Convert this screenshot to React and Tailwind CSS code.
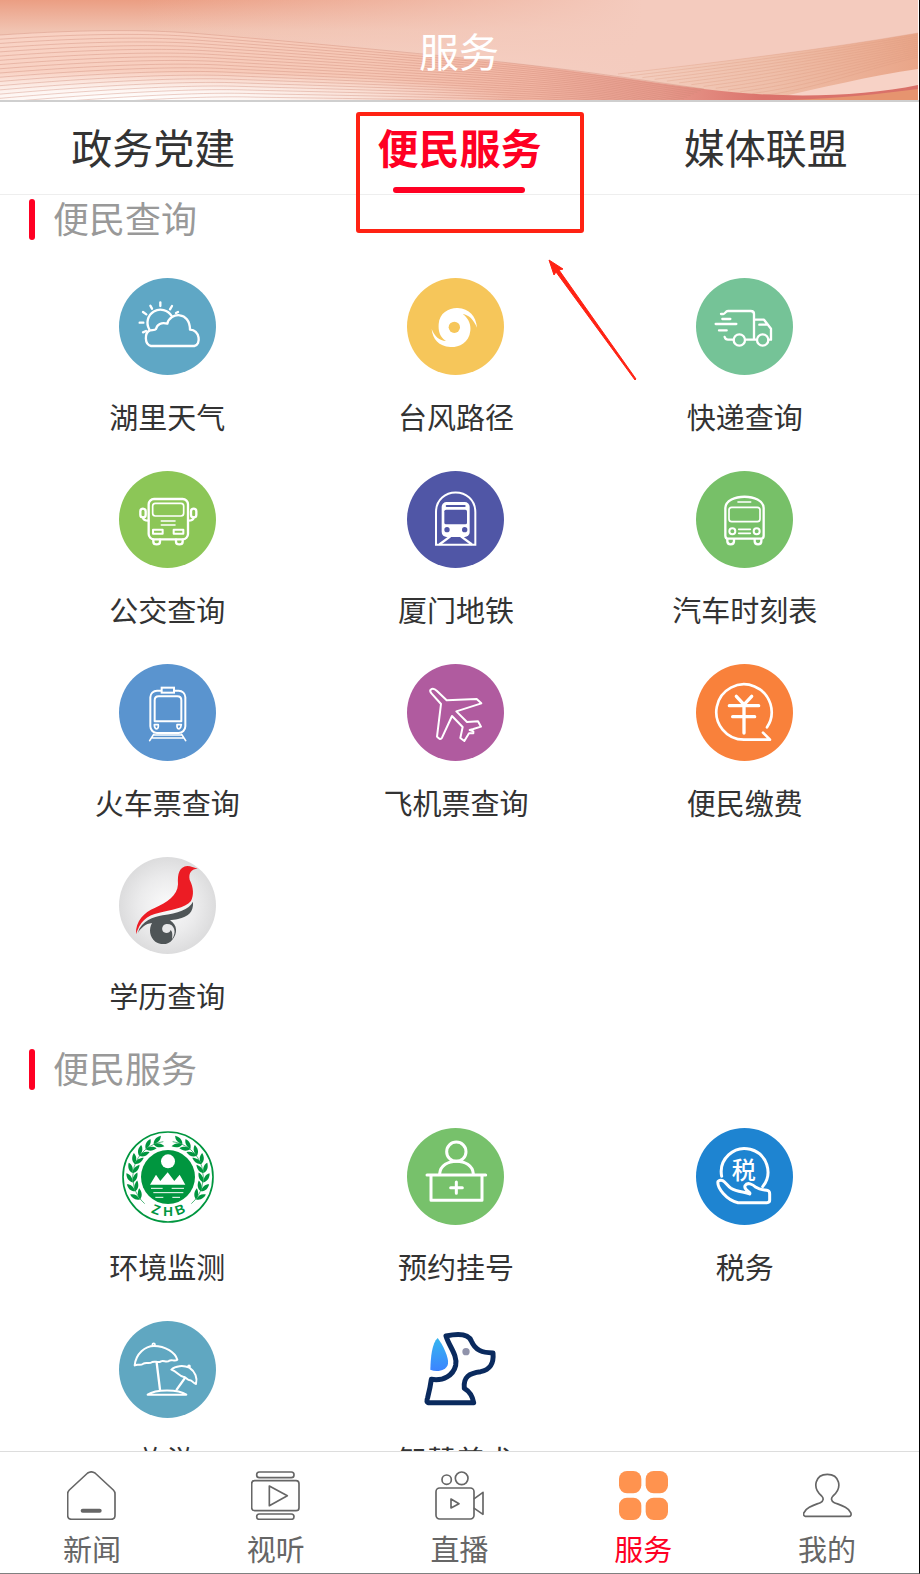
import React, { useState } from 'react';

const white = { fill: 'none', stroke: '#fff', strokeWidth: 7, strokeLinecap: 'round', strokeLinejoin: 'round' };
const outline = { fill: 'none', stroke: '#666', strokeWidth: 5, strokeLinecap: 'round', strokeLinejoin: 'round' };

// Round badge, every service icon is drawn on a 291 grid
function Badge({ color, x = 0, y = 0, children }) {
    return (
        <svg className="size-[97px]" viewBox="0 0 291 291" aria-hidden="true">
            {color && <circle cx="145.5" cy="145.5" r="145.5" fill={color} />}
            <g transform={`translate(${-x} ${-y})`}>{children}</g>
        </svg>
    );
}

function WeatherIcon() {
    return (
        <Badge color="#5fa7c5" x={87} y={54}>
            <g {...white}>
                <path d="M183 258C163 254 163 218 180 211C187 209 194 212 198 207C201 193 214 186 232 191C240 156 300 153 300 209C330 211 334 254 313 258Z" />
                <path d="M178 208A38 38 0 1 1 245 168" />
                <path d="M211 127V138M181 137L186 146M159 156L169 163M149 188H160M159 217L168 213M246 138L240 148M264 156L258 159" />
            </g>
        </Badge>
    );
}

function TyphoonIcon() {
    return (
        <Badge color="#f6c65a" x={951} y={54}>
            <path
                fill="#fff"
                d="M1046 192C1048 158 1078 143 1103 144C1138 146 1158 168 1161 203C1150 178 1137 165 1118 162C1138 176 1143 198 1141 212C1137 250 1105 262 1081 261C1046 259 1028 238 1025 207C1034 230 1048 242 1068 243C1047 230 1045 210 1046 192Z"
            />
            <circle cx="1093" cy="202" r="17" fill="#f6c65a" />
        </Badge>
    );
}

function TruckIcon() {
    return (
        <Badge color="#75c397" x={588} y={114}>
            <g {...white}>
                <path d="M663 222H670C676 222 676 213 684 213H752Q762 213 762 222V299M736 299H770" />
                <path d="M766 239H792L813 266V299H806M778 254H802M674 291Q676 299 684 299H700" />
                <path d="M667 237H691M647 252H709M657 271H680" />
                <circle cx="718" cy="300" r="17" />
                <circle cx="788" cy="300" r="17" />
            </g>
        </Badge>
    );
}

function BusIcon() {
    return (
        <Badge color="#8cc657" x={87} y={631}>
            <g {...white}>
                <rect x="176" y="715" width="118" height="121" rx="16" />
                <rect x="188" y="728" width="93" height="38" rx="8" strokeWidth="5" />
                <path d="M214 781H255M214 793H255" strokeWidth="5" />
                <rect x="189" y="807" width="29" height="12" strokeWidth="6" />
                <rect x="251" y="807" width="29" height="12" strokeWidth="6" />
                <rect x="151" y="744" width="16" height="26" rx="8" />
                <rect x="303" y="744" width="16" height="26" rx="8" />
                <path d="M159 770Q160 780 175 780M311 770Q310 780 295 780" />
                <path d="M190 837V843Q190 851 200 851Q210 851 210 843V837M258 837V843Q258 851 268 851Q278 851 278 843V837" />
            </g>
        </Badge>
    );
}

function MetroIcon() {
    return (
        <Badge color="#5056a6" x={951} y={631}>
            <path {...white} strokeWidth="6" strokeLinejoin="miter" d="M1038 852V755C1038 676 1156 676 1156 755V852Z" />
            <path {...white} d="M1080 828L1050 850M1114 828L1144 850" strokeWidth="7" />
            <rect x="1055" y="724" width="84" height="105" rx="15" fill="#fff" />
            <path d="M1070 736H1124" stroke="#5056a6" strokeWidth="6" strokeLinecap="round" />
            <rect x="1063" y="747" width="68" height="44" rx="5" fill="#5056a6" />
            <circle cx="1071" cy="807" r="8" fill="#5056a6" />
            <circle cx="1124" cy="807" r="8" fill="#5056a6" />
        </Badge>
    );
}

function CoachIcon() {
    return (
        <Badge color="#77c068" x={588} y={691}>
            <g {...white}>
                <path d="M676 885V802C678 757 789 757 791 802V885Q791 894 782 894H685Q676 894 676 885Z" />
                <rect x="687" y="800" width="93" height="43" rx="8" strokeWidth="5" />
                <path d="M714 784H752M716 866H751M716 878H751" strokeWidth="5" />
                <circle cx="697" cy="872" r="9" strokeWidth="6" />
                <circle cx="770" cy="872" r="9" strokeWidth="6" />
                <path d="M682 896V902Q682 911 692 911Q702 911 702 902V896M764 896V902Q764 911 774 911Q784 911 784 902V896" />
            </g>
        </Badge>
    );
}

function TrainIcon() {
    return (
        <Badge color="#5a94cf" x={87} y={69}>
            <g {...white} strokeWidth="6">
                <rect x="181" y="149" width="105" height="127" rx="20" />
                <rect x="215" y="140" width="37" height="15" fill="#5a94cf" strokeLinejoin="miter" />
                <path d="M194 241V178Q194 166 206 166H262Q274 166 274 178V241Z" />
                <path d="M193 251H205V257Q204 264 199 264Q193 261 193 251ZM274 251H261V257Q262 264 267 264Q273 261 274 251Z" strokeWidth="5" />
                <path d="M192 282H276M188 291H280M191 280L179 299M275 280L287 299" strokeWidth="5" />
            </g>
        </Badge>
    );
}

function PlaneIcon() {
    return (
        <Badge color="#b05b9f" x={951} y={69}>
            <path
                {...white}
                strokeWidth="6"
                d="M1022 146C1028 141 1036 145 1041 150L1070 178L1160 174L1174 187L1099 211L1131 243L1164 241L1173 257L1150 264L1139 267L1150 271V277L1137 277L1123 300L1111 291L1118 258L1086 225L1056 290Q1051 299 1041 287L1053 189L1025 158Q1018 150 1022 146Z"
            />
        </Badge>
    );
}

function PaymentIcon() {
    return (
        <Badge color="#f9813b" x={138} y={69}>
            <g {...white} strokeWidth="10">
                <path d="M351 259A83 83 0 1 0 282 296H360L339 275" strokeWidth="8" />
                <path d="M259 166L282 191L305 166M238 194H326M248 227H314M282 191V276" />
            </g>
        </Badge>
    );
}

function EducationIcon() {
    return (
        <Badge x={87} y={648}>
            <defs>
                <radialGradient id="silver">
                    <stop offset="0" stopColor="#fbfbfb" />
                    <stop offset="0.6" stopColor="#ebebec" />
                    <stop offset="1" stopColor="#dcdcdd" />
                </radialGradient>
            </defs>
            <circle cx="232.5" cy="793.5" r="145.5" fill="url(#silver)" />
            <path
                fill="#ec1c24"
                d="M138 880C136 840 163 814 194 801C232 784 262 765 264 730C262 698 268 677 292 675C303 675 310 680 323 683C305 684 295 694 299 716C311 740 312 762 303 780C285 802 240 807 208 815C168 824 150 842 138 880Z"
            />
            <path
                fill="#4f5557"
                d="M143 876C156 838 190 828 218 823C262 817 297 806 309 782C311 814 295 826 264 834C255 836 246 837 240 838C263 852 263 878 247 896C236 912 212 913 196 902C178 888 176 864 186 846C166 848 154 860 143 876Z"
            />
            <path fill="#e8e8e9" d="M222 874C213 868 215 851 229 849C252 847 262 872 246 895C248 880 247 872 242 867C240 875 230 879 222 874Z" />
        </Badge>
    );
}

function Laurel() {
    const steps = [2, 17, 32, 47, 62, 77, 92, 107];
    return (
        <g>
            <path d="M164 308A107 107 0 0 1 220 122" fill="none" stroke="#00963f" strokeWidth="2" />
            {steps.map((step) => (
                <g key={step} transform={`rotate(${-step - 12} 234 228)`}>
                    <path d="M216 122C220 107 232 103 243 103C240 115 230 122 216 122Z" />
                    <path d="M216 122C228 119 240 126 246 136C232 138 221 134 216 122Z" />
                </g>
            ))}
        </g>
    );
}

function EnvironmentIcon() {
    return (
        <Badge x={87} y={81}>
            <g fill="#00963f">
                <circle cx="234" cy="228" r="135" fill="#fff" stroke="#00963f" strokeWidth="5" />
                <circle cx="234" cy="228" r="81" />
                <Laurel />
                <g transform="translate(468 0) scale(-1 1)">
                    <Laurel />
                </g>
                <g fontFamily="Liberation Sans, Arial, sans-serif" fontWeight="700" fontSize="40" textAnchor="middle">
                    <text x="234" y="346" transform="rotate(20 234 228)">Z</text>
                    <text x="234" y="346">H</text>
                    <text x="234" y="346" transform="rotate(-20 234 228)">B</text>
                </g>
            </g>
            <circle cx="234" cy="181" r="21" fill="#fff" />
            <path fill="#fff" d="M180 251L198 221L211 240L233 214L253 240L269 221L286 251Z" />
            <path d="M183 262H218M245 262H282M190 275H280M196 289H220M247 289H270" stroke="#fff" strokeWidth="3" />
        </Badge>
    );
}

function RegisterIcon() {
    return (
        <Badge color="#77c16b" x={951} y={82}>
            <g {...white} strokeWidth="9">
                <circle cx="1099" cy="153" r="29" />
                <path d="M1049 219C1053 169 1146 169 1150 219M1011 223H1187M1023 226V299H1176V226" />
                <path d="M1082 261H1117M1099 244V278" />
            </g>
        </Badge>
    );
}

function TaxIcon() {
    return (
        <Badge color="#1e84d1" x={888} y={53}>
            <g {...white} strokeWidth="9">
                <path d="M965 198A70 70 0 1 1 1088 229" />
                <path d="M954 213C970 201 978 224 993 234C1012 246 1035 244 1049 251C1054 245 1030 239 1035 226C1042 214 1058 222 1068 231C1082 240 1096 238 1104 241Q1109 243 1109 251V270Q1109 277 1101 277H1014C980 270 950 232 954 213Z" />
            </g>
            <text x="1031" y="205" fill="#fff" fontSize="72" fontWeight="500" textAnchor="middle">税</text>
        </Badge>
    );
}

function TravelIcon() {
    return (
        <Badge color="#60a7c1" x={87} y={660}>
            <g {...white}>
                <path d="M134 793C138 758 165 735 192 735C226 735 256 755 262 776C254 783 246 774 238 779C230 786 221 777 213 781C204 787 195 779 187 783C178 790 168 783 160 788C151 795 142 788 134 793Z" strokeWidth="6" />
                <circle cx="191" cy="731" r="4" strokeWidth="5" />
                <path d="M200 785L210 866M284 832L260 866" />
                <path d="M244 806C256 794 280 792 298 800C316 812 323 832 318 849C309 847 307 838 300 838C292 838 288 828 280 827C267 825 262 812 244 806Z" strokeWidth="6" />
                <circle cx="297" cy="796" r="3" strokeWidth="5" />
                <path d="M173 881C197 864 265 864 289 881Z" strokeWidth="6" />
            </g>
        </Badge>
    );
}

function DogIcon() {
    return (
        <Badge x={951} y={660}>
            <defs>
                <linearGradient id="ear" x1="0" y1="0" x2="0" y2="1">
                    <stop offset="0" stopColor="#36b6ef" />
                    <stop offset="1" stopColor="#3b84ff" />
                </linearGradient>
            </defs>
            <path
                fill="none"
                stroke="#0a2a5e"
                strokeWidth="15"
                strokeLinejoin="round"
                d="M1068 705C1105 697 1136 700 1144 720C1156 748 1176 755 1209 756C1212 790 1199 806 1172 812C1138 816 1119 828 1123 862C1137 870 1148 888 1151 905H1014C1009 902 1011 895 1013 890C1018 870 1022 850 1024 835C1060 841 1090 823 1097 793C1103 762 1078 738 1068 705Z"
            />
            <path fill="url(#ear)" d="M1043 711C1058 730 1077 770 1074 788C1070 808 1042 815 1021 806C1022 770 1026 725 1043 711Z" />
            <circle cx="1128" cy="752" r="11" fill="#9093ab" />
        </Badge>
    );
}

function TabSvg({ x, y, children }) {
    return (
        <svg className="size-[49px]" viewBox="0 0 147 147" aria-hidden="true">
            <g transform={`translate(${-x} ${-y})`} {...outline}>{children}</g>
        </svg>
    );
}

function HomeIcon() {
    return (
        <TabSvg x={199} y={122}>
            <path d="M213 267Q201 267 201 255V190Q201 184 206 179L261 128Q272 121 283 128L338 179Q343 184 343 190V255Q343 267 331 267Z" />
            <path d="M246 241H297" strokeWidth="12" />
        </TabSvg>
    );
}

function VideoIcon() {
    return (
        <TabSvg x={751} y={122}>
            <rect x="768" y="125" width="112" height="17" rx="8" />
            <rect x="753" y="151" width="142" height="90" rx="9" />
            <rect x="768" y="251" width="112" height="16" rx="8" />
            <path d="M806 167V226L860 196Z" />
        </TabSvg>
    );
}

function LiveIcon() {
    return (
        <TabSvg x={1303} y={122}>
            <circle cx="1338" cy="148" r="14" />
            <circle cx="1383" cy="144" r="19" />
            <rect x="1306" y="173" width="114" height="93" rx="11" />
            <path d="M1421 205L1447 186V252L1421 234M1351 206V233L1375 220Z" />
        </TabSvg>
    );
}

function ServiceIcon() {
    return (
        <svg className="size-[49px]" viewBox="0 0 147 147" fill="#ff934f" aria-hidden="true">
            <rect width="67" height="67" rx="24" />
            <rect x="80" width="67" height="67" rx="24" />
            <rect y="80" width="67" height="67" rx="24" />
            <rect x="80" y="80" width="67" height="67" rx="24" />
        </svg>
    );
}

function ProfileIcon() {
    return (
        <TabSvg x={1029} y={122}>
            <path d="M1036 258C1026 256 1030 241 1048 231C1062 223 1072 221 1081 217C1092 212 1091 203 1085 197C1055 172 1066 132 1102 132C1138 132 1149 172 1119 197C1113 203 1112 212 1123 217C1132 221 1142 223 1156 231C1174 241 1178 256 1168 258Z" />
        </TabSvg>
    );
}

const HILL = 'M0 35C90 29 150 30 190 33C290 39 390 52 510 63C580 71 640 81 704 89C780 99 860 97 918 85V100H0Z';

function HeaderWaves() {
    const lines = Array.from({ length: 19 }, (_, i) => i / 18);
    return (
        <svg className="absolute inset-0 h-full w-full" viewBox="0 0 918 100" preserveAspectRatio="none" aria-hidden="true">
            <defs>
                <linearGradient id="sky" x1="0" y1="0" x2="0" y2="1">
                    <stop offset="0" stopColor="#eb9e83" />
                    <stop offset="0.3" stopColor="#f1c3b1" />
                    <stop offset="0.7" stopColor="#f6d5c8" />
                </linearGradient>
                <linearGradient id="skyRight" x1="0" y1="0" x2="1" y2="0">
                    <stop offset="0.15" stopColor="#f4cbbe" stopOpacity="0" />
                    <stop offset="0.7" stopColor="#f4cbbe" />
                </linearGradient>
                <linearGradient id="wave" x1="0" y1="0" x2="1" y2="0">
                    <stop offset="0" stopColor="#f9d3c5" />
                    <stop offset="0.4" stopColor="#f6c7b5" />
                    <stop offset="0.58" stopColor="#f2b5a3" />
                    <stop offset="0.72" stopColor="#e79a8c" />
                    <stop offset="0.83" stopColor="#db736c" />
                    <stop offset="1" stopColor="#d97068" />
                </linearGradient>
                <radialGradient id="glow" cx="0.14" cy="1" r="0.42">
                    <stop offset="0" stopColor="#fff" />
                    <stop offset="0.35" stopColor="#fff" stopOpacity="0.8" />
                    <stop offset="1" stopColor="#fff" stopOpacity="0" />
                </radialGradient>
                <linearGradient id="band" x1="0" y1="0" x2="1" y2="0">
                    <stop offset="0" stopColor="#f4cfc1" />
                    <stop offset="0.5" stopColor="#efbfaa" />
                    <stop offset="1" stopColor="#e9a588" />
                </linearGradient>
            </defs>
            <rect width="918" height="100" fill="url(#sky)" />
            <rect width="918" height="100" fill="url(#skyRight)" />
            <path d="M618 74C720 62 820 50 918 33V100H700Z" fill="url(#band)" />
            <path d="M775 98C820 88 870 76 918 69V100H775Z" fill="#f7d2c6" />
            {lines.slice(0, 13).map((t) => (
                <path
                    key={t}
                    d={`M${618 + t * 220} ${74 + t * 32}C${720 + t * 150} ${62 + t * 38} ${820 + t * 50} ${50 + t * 34} 918 ${33 + t * 36}`}
                    fill="none"
                    stroke="#dc9a80"
                    strokeOpacity="0.35"
                />
            ))}
            <path d={HILL} fill="url(#wave)" />
            <path d={HILL} fill="url(#glow)" />
            {lines.map((t) => (
                <path
                    key={t}
                    d={`M0 ${35 + t * 76}C${90 + t * 40} ${29 + t * 70} ${150 + t * 60} ${30 + t * 66} ${190 + t * 60} ${33 + t * 64}S${420 + t * 20} ${53 + t * 46} ${510 + t * 30} ${63 + t * 40}S${640 - t * 20} ${80 + t * 30} ${704 - t * 60} ${89 + t * 30}`}
                    fill="none"
                    stroke="#cc8573"
                    strokeOpacity="0.38"
                />
            ))}
            <path d="M790 100C840 98 880 94 918 89V100Z" fill="#e6946f" />
        </svg>
    );
}

const tabs = ['政务党建', '便民服务', '媒体联盟'];

const sections = [
    {
        title: '便民查询',
        items: [
            { name: '湖里天气', icon: WeatherIcon },
            { name: '台风路径', icon: TyphoonIcon },
            { name: '快递查询', icon: TruckIcon },
            { name: '公交查询', icon: BusIcon },
            { name: '厦门地铁', icon: MetroIcon },
            { name: '汽车时刻表', icon: CoachIcon },
            { name: '火车票查询', icon: TrainIcon },
            { name: '飞机票查询', icon: PlaneIcon },
            { name: '便民缴费', icon: PaymentIcon },
            { name: '学历查询', icon: EducationIcon },
        ],
    },
    {
        title: '便民服务',
        items: [
            { name: '环境监测', icon: EnvironmentIcon },
            { name: '预约挂号', icon: RegisterIcon },
            { name: '税务', icon: TaxIcon },
            { name: '旅游', icon: TravelIcon },
            { name: '智慧养犬', icon: DogIcon },
        ],
    },
];

const navItems = [
    { name: '新闻', icon: HomeIcon },
    { name: '视听', icon: VideoIcon },
    { name: '直播', icon: LiveIcon },
    { name: '服务', icon: ServiceIcon },
    { name: '我的', icon: ProfileIcon },
];

// Red frame and arrow pointing at the middle tab
function Highlight() {
    return (
        <svg
            className="pointer-events-none absolute top-[10px] left-1/2 z-10 -ml-[104px] h-[270px] w-[284px]"
            viewBox="0 0 284 270"
            aria-hidden="true"
        >
            <rect x="2" y="2" width="224" height="117" rx="1" fill="none" stroke="#ff2213" strokeWidth="4" />
            <path d="M193 148L207 157L203 158L280 267L279 268L200 160L198 163Z" fill="#ff2213" stroke="#ff2213" strokeLinejoin="round" />
        </svg>
    );
}

function ServiceSection({ title, items }) {
    return (
        <section className="mb-[31px]">
            <h2 className="mb-[38px] flex h-[41px] pl-[29px] text-[36px] leading-[36px] text-[#999]">
                <span className="mr-[18px] h-full w-[6px] rounded-sm bg-[#ff0023]" />
                {title}
            </h2>
            <div className="grid grid-cols-3 gap-y-8 pr-[30px] pl-[23px]">
                {items.map(({ name, icon: Icon }) => (
                    <button key={name} type="button" className="flex h-[161px] flex-col items-center gap-5">
                        <Icon />
                        <span className="text-[29px] leading-[42px] whitespace-nowrap text-[#333]">{name}</span>
                    </button>
                ))}
            </div>
        </section>
    );
}

function App() {
    const [activeTab, setActiveTab] = useState('便民服务');
    const [activeNav, setActiveNav] = useState('服务');

    return (
        <div className="flex h-screen flex-col border-r border-b border-r-black border-b-[#808080] bg-white font-['Noto_Sans_CJK_SC',sans-serif]">
            <header className="relative mr-px flex h-[100px] shrink-0 items-center justify-center">
                <HeaderWaves />
                <h1 className="relative text-[40px] leading-[60px] text-white">服务</h1>
            </header>

            <div className="relative shrink-0 border-t-2 border-b border-t-[#cfcfcf] border-b-[#eee]">
                <div className="grid grid-cols-3">
                    {tabs.map((tab) => (
                        <button
                            key={tab}
                            type="button"
                            onClick={() => setActiveTab(tab)}
                            className={`flex h-[92px] flex-col items-center pt-[14px] text-[41px] leading-[60px] ${
                                activeTab === tab ? 'font-bold text-[#ff0023]' : 'text-[#333]'
                            }`}
                        >
                            {tab}
                            {activeTab === tab && <span className="mt-[11px] h-[6px] w-[132px] rounded-full bg-[#ff0023]" />}
                        </button>
                    ))}
                </div>
                <Highlight />
            </div>

            <main className="min-h-0 flex-1 overflow-hidden pt-1">
                {sections.map((section) => (
                    <ServiceSection key={section.title} title={section.title} items={section.items} />
                ))}
            </main>

            <nav className="grid h-[122px] shrink-0 grid-cols-5 border-t border-[#ddd] bg-white">
                {navItems.map(({ name, icon: Icon }) => (
                    <button
                        key={name}
                        type="button"
                        onClick={() => setActiveNav(name)}
                        className={`flex flex-col items-center gap-2 pt-[19px] text-[29px] leading-[40px] ${
                            activeNav === name ? 'text-[#ff0023]' : 'text-[#666]'
                        }`}
                    >
                        <Icon />
                        {name}
                    </button>
                ))}
            </nav>
        </div>
    );
}

export default App;
